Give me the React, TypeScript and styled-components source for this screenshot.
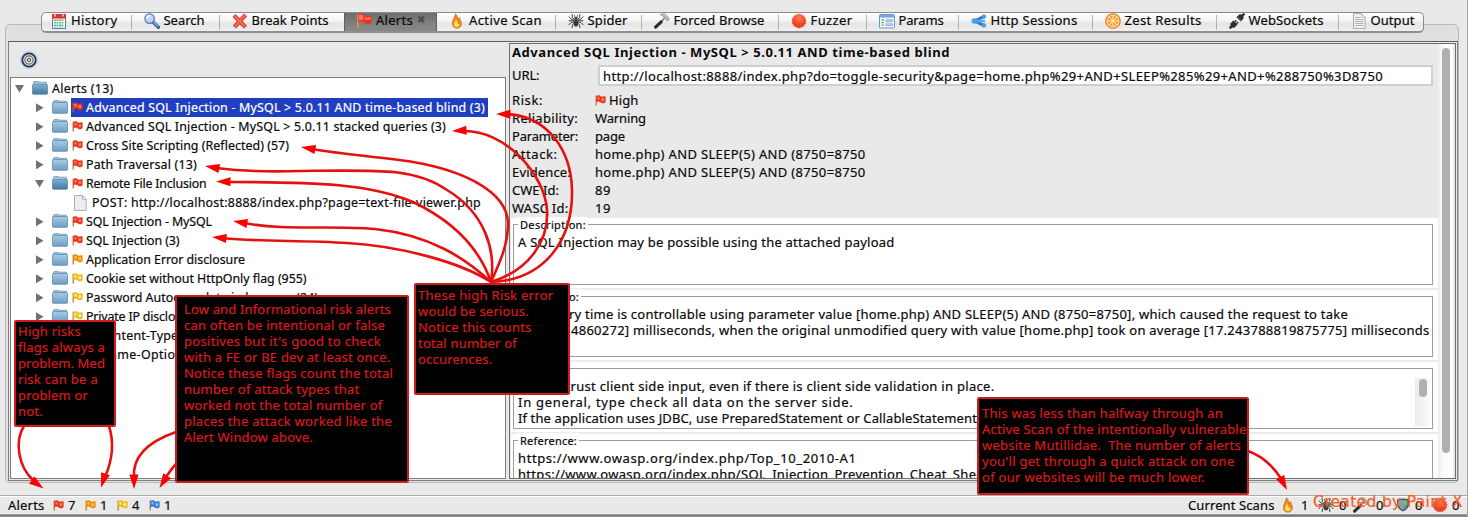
import React, { useLayoutEffect, useRef, useState } from "react";
import styled, { createGlobalStyle } from "styled-components";

const Global = createGlobalStyle`
  body { margin: 0; background: #e8e8e8; overflow: hidden; }
  * { box-sizing: border-box; }
`;

const Page = styled.div`
  position: relative;
  width: 1468px;
  height: 517px;
  overflow: hidden;
  display: flex;
  flex-direction: column;
  padding-top: 24px;
  background: #e9e9e9;
  border-right: 1px solid #a8a8a8;
  color: #0a0a0a;
  font: 13px/16px "Noto Sans", "Open Sans", sans-serif;
  -webkit-text-stroke: 0.2px;
  white-space: pre;
`;

/* Text tracked out to a given advance width. */
const TextSpan = styled.span`
  display: inline-block;
  white-space: pre;
  flex: none;
`;
function T({ w, children }: { w: number; children: string }) {
  const ref = useRef<HTMLSpanElement>(null);
  const [ls, setLs] = useState(0);
  useLayoutEffect(() => {
    if (ref.current) setLs((w - ref.current.getBoundingClientRect().width) / children.length);
  }, []);
  return <TextSpan ref={ref} style={{ letterSpacing: ls }}>{children}</TextSpan>;
}

const Panel = styled.div`
  width: 1454px;
  height: 459px;
  margin-left: 5px;
  border: 1px solid #b9b9b9;
  border-radius: 5px;
  background: #dfdfdf;
  flex: none;
`;
const TabStrip = styled.div`
  display: flex;
  width: 1383px;
  height: 21px;
  margin: -13px 0 0 35px;
  border: 1px solid #8c8c8c;
  border-bottom: 2px solid #8f8f8f;
  border-radius: 5px;
  overflow: hidden;
  background: linear-gradient(#fdfdfd, #f4f4f4 45%, #e4e4e4 55%, #efefef);
`;
const Tab = styled.div<{ $w: number; $first?: boolean; $active?: boolean }>`
  position: relative;
  flex: none;
  display: flex;
  align-items: center;
  gap: 4px;
  width: ${(p) => p.$w}px;
  height: 18px;
  padding-left: ${(p) => (p.$first ? 9 : 12)}px;
  ${(p) => p.$active && "background: linear-gradient(#6d6d6d, #828282 60%, #8a8a8a); height: 20px; padding-bottom: 2px; box-shadow: inset 1px 0 #5e5e5e, inset -1px 0 #5e5e5e;"}
  svg { flex: none; margin-top: -3px; }
`;
const TabRule = styled.i`
  position: absolute;
  right: 0;
  top: 2px;
  width: 1px;
  height: 15px;
  background: #b3b3b3;
`;
const TabLabel = styled.span`
  margin-top: -4px;
  display: flex;
`;
const CloseMark = styled.span`
  margin: -4px 0 0 0;
  color: #4d4d4d;
  font: bold 10px/12px "DejaVu Sans", sans-serif;
`;

const Frame = styled.div`
  display: flex;
  width: 1450px;
  height: 440px;
  margin: 8px 0 0 2px;
  border: 1px solid #808080;
  border-top-color: #5f5f5f;
  background: #e9e9e9;
`;
const Left = styled.div`
  width: 497px;
  padding: 0 0 1px 1px;
  display: flex;
  flex-direction: column;
`;
const Toolbar = styled.div`
  height: 35px;
  padding: 8px 0 0 9px;
  flex: none;
`;
const Tree = styled.div`
  flex: 1;
  border: 1px solid #7d7d7d;
  background: #fff;
  padding-top: 1px;
  font-size: 12.4px;
`;
const Row = styled.div<{ $level: number }>`
  display: flex;
  align-items: center;
  height: 19px;
  padding-left: ${(p) => [4, 24, 63][p.$level]}px;
`;
const Twist = styled.svg`
  flex: none;
  margin-right: 7px;
`;
const RowLabel = styled.div<{ $selected?: boolean }>`
  display: flex;
  align-items: center;
  gap: 3px;
  height: 19px;
  margin-left: 3px;
  padding: 1px 3px 0 1px;
  svg { margin-top: -2px; }
  ${(p) => p.$selected && "background: #1f3fc0; color: #fff;"}
`;
const PlainLabel = styled.div<{ $gap: number }>`
  display: flex;
  padding-top: 1px;
  margin-left: ${(p) => p.$gap}px;
`;

const Right = styled.div`
  display: flex;
  width: 947px;
  margin: 1px 0 1px 3px;
  border: 1px solid #6e6e6e;
  overflow: hidden;
`;
const Detail = styled.div`
  width: 928px;
  flex: none;
  overflow: hidden;
`;
const Info = styled.div`
  height: 174px;
  padding-left: 2px;
`;
const Title = styled.div`
  height: 20px;
  font-weight: 700;
  -webkit-text-stroke: 0;
`;
const UrlLine = styled.div`
  display: flex;
  align-items: center;
  height: 24px;
  margin: -1px 0 4px;
`;
const UrlLabel = styled.div`
  width: 86px;
`;
const UrlField = styled.div`
  width: 835px;
  height: 21px;
  padding: 1px 0 0 3px;
  border: 2px solid #cfcfcf;
  background: #fff;
`;
const Pair = styled.div`
  display: grid;
  grid-template-columns: 83px auto;
  align-items: center;
  height: 18px;
`;
const Value = styled.div`
  display: flex;
  align-items: center;
  gap: 3px;
`;
const Section = styled.div`
  height: 72px;
  padding: 6px 5px 0 2px;
  margin-left: 1px;
  background: #fff;
  border-bottom: 2px solid #ececec;
`;
const Box = styled.div`
  display: flex;
  position: relative;
  height: 61px;
  padding: 9px 0 0 4px;
  border: 1px solid #9c9c9c;
`;
const Legend = styled.div`
  position: absolute;
  top: -8px;
  left: 4px;
  padding: 0 2px;
  background: #fff;
  font-size: 11px;
  line-height: 15px;
`;
const Lines = styled.div`
  flex: 1;
`;
const Line = styled.div`
  height: 16px;
`;
const SmallTrack = styled.div`
  width: 15px;
  height: 48px;
  margin-right: 2px;
  padding: 1px 0 0 4px;
  background: linear-gradient(90deg, #ececec, #fafafa);
`;
const Thumb = styled.div<{ $h: number }>`
  width: 8px;
  height: ${(p) => p.$h}px;
  border-radius: 4px;
  background: #b0b0b0;
`;
const Track = styled.div`
  width: 15px;
  padding: 4px 0 0 4px;
  background: linear-gradient(90deg, #ececec, #fafafa 30%, #fff);
`;

const Status = styled.div`
  display: flex;
  align-items: center;
  height: 20px;
  margin-top: 12px;
  padding-left: 8px;
  border-top: 1px solid #aaa;
  border-bottom: 1px solid #a0a0a0;
  box-shadow: inset 0 1px #fff, 0 1px #777, 0 2px #8c8c8c;
  flex: none;
`;
const Count = styled.div<{ $w: number; $gap?: number }>`
  display: flex;
  align-items: center;
  gap: ${(p) => p.$gap ?? 4}px;
  width: ${(p) => p.$w}px;
  flex: none;
`;
const StatusLabel = styled.div<{ $w: number }>`
  width: ${(p) => p.$w}px;
  flex: none;
`;
const Overlay = styled.svg`
  position: absolute;
  left: 0;
  top: 0;
`;
const Note = styled.div<{ $x: number; $y: number; $w: number; $h: number; $px: number; $py: number }>`
  position: absolute;
  left: ${(p) => p.$x}px;
  top: ${(p) => p.$y}px;
  width: ${(p) => p.$w}px;
  height: ${(p) => p.$h}px;
  padding: ${(p) => p.$py}px 0 0 ${(p) => p.$px}px;
  border: 2px solid #d01a1c;
  border-radius: 2px;
  background: #000;
  color: #dc1a1a;
`;
const Credit = styled.div`
  position: absolute;
  left: 1313px;
  top: 493px;
  color: #f4602a;
  font: 15.5px/18px "DejaVu Sans", sans-serif;
`;

const flagColors: Record<string, [string, string]> = {
  red: ["#e8301c", "#ff7a5c"],
  orange: ["#f08a08", "#ffc04a"],
  yellow: ["#e8b818", "#fff08a"],
  blue: ["#2f74d0", "#8abcf6"],
};
function Flag({ c = "red" }: { c?: string }) {
  const [a, b] = flagColors[c];
  return (
    <svg width="11" height="11" viewBox="0 0 11 11">
      <path d="M1.2 .8V10.5" stroke="#b9702c" strokeWidth="1.2" />
      <path d="M1.5 1.2C3 .2 4.5 .4 5.4 1.4C7 2.2 8.6 2 10.2 1.6V7.2C8.5 8.4 6.8 8 5.6 7C4.2 5.8 2.8 6 1.5 6.8Z" fill={a} stroke={a} strokeWidth=".7" />
      <path d="M2.4 2C3.2 1.5 4 1.7 4.6 2.3V4.8C3.8 4.4 3 4.5 2.4 4.8ZM6.4 3.2C7.4 3.5 8.4 3.3 9.2 3V5.9C8.2 6.4 7.2 6.3 6.4 5.7Z" fill={b} />
    </svg>
  );
}
const BigFlag = () => (
  <svg width="16" height="16" viewBox="0 0 16 16">
    <path d="M2 1V15.5" stroke="#dd9550" strokeWidth="1.6" />
    <path d="M2.4 1.2C5 0 7 .6 8.2 2.2C10.5 3.6 13 3 15.5 2.4V10C12.6 11.6 10 11 8 9.4C6 8 4 8.4 2.4 9.4Z" fill="#ee2f1d" />
    <path d="M3 2C5 1 6.5 1.5 7.4 2.8V7.6C5.8 6.8 4.4 7 3 7.6ZM8.8 4C11 4.8 13 4.4 14.8 3.8V6.5C12.6 7.4 10.6 7.2 8.8 6.2Z" fill="#ff7057" />
  </svg>
);
const Folder = ({ open }: { open?: boolean }) => (
  <svg width="16" height="15" viewBox="0 0 16 15">
    <defs>
      <linearGradient id="fold" x1="0" y1="0" x2="0" y2="1"><stop offset="0" stopColor="#a9cbe3" /><stop offset="1" stopColor="#6d9cc2" /></linearGradient>
      <linearGradient id="foldo" x1="0" y1="0" x2="0" y2="1"><stop offset="0" stopColor="#7fb0d2" /><stop offset="1" stopColor="#43779f" /></linearGradient>
    </defs>
    <path d="M1.5 3V1.2Q1.5 .5 2.5 .5H6Q7 .5 7 1.2H14.5V4" fill="#9fc3dc" stroke="#6f9bbb" strokeWidth=".8" />
    <rect x=".5" y={open ? 3.5 : 2.5} width="15" height={open ? 9.8 : 10.8} rx=".8" fill={open ? "url(#foldo)" : "url(#fold)"} stroke="#5f8cb0" strokeWidth=".8" />
  </svg>
);
const Triangle = ({ open }: { open?: boolean }) => (
  <Twist width="10" height="10" viewBox="0 0 10 10">
    <path d={open ? "M0 1H9L4.5 8.5Z" : "M1 .3L8.5 4.8L1 9.3Z"} fill="#707070" />
  </Twist>
);
const Doc = ({ lined }: { lined?: boolean }) => (
  <svg width={lined ? 16 : 13} height="16" viewBox={lined ? "-2 0 16 16" : "0 0 13 16"}>
    <path d="M.5 .6H8.5L12.2 4.4V15.4H.5Z" fill={lined ? "#f3f3f3" : "#ededed"} stroke="#a4a4a4" strokeWidth=".9" />
    <path d="M8.5 .6V4.4H12.2Z" fill="#fff" stroke="#a4a4a4" strokeWidth=".7" />
    {lined && <path d="M2 4.5H7M2 6.5H10.5M2 8.5H10.5M2 10.5H10.5M2 12.5H10.5" stroke="#a8a8a8" strokeWidth=".9" />}
  </svg>
);
const Calendar = () => (
  <svg width="16" height="16" viewBox="0 0 16 16">
    <rect x="1.5" y="2" width="13" height="13.5" fill="#fff" stroke="#4d8a86" />
    <rect x="1" y="1" width="14" height="4.6" fill="#d8392e" />
    <path d="M4 0V3.5M12 0V3.5" stroke="#f6d4cd" strokeWidth="1.4" />
    <path d="M3 7.2H13M3 9.7H13M3 12.2H13" stroke="#5ba884" strokeWidth="1.5" strokeDasharray="1.8 .7" />
    <path d="M3 14H13" stroke="#6aa0cf" strokeDasharray="1.8 .7" />
  </svg>
);
const Magnifier = () => (
  <svg width="16" height="16" viewBox="0 0 16 16">
    <path d="M9 9L14.4 14.3" stroke="#34659e" strokeWidth="3.4" strokeLinecap="round" />
    <path d="M9.5 9L14 13.4" stroke="#8fbce8" strokeWidth="1.1" />
    <circle cx="5.6" cy="5.6" r="4.7" fill="#bcd6f8" stroke="#5878c8" strokeWidth="1.3" />
    <path d="M2.8 5.5Q3.4 2.9 6.2 2.8" stroke="#fff" strokeWidth="1.6" fill="none" />
  </svg>
);
const Cross = () => (
  <svg width="16" height="16" viewBox="0 0 16 16">
    <path d="M2 2.5L13.6 14.2M13.6 1.8L2.4 14" stroke="#d43a2b" strokeWidth="4.2" />
    <path d="M2 2.5L13.6 14.2M13.6 1.8L2.4 14" stroke="#fa6a55" strokeWidth="2.3" />
  </svg>
);
const Flame = ({ w = 16 }: { w?: number }) => (
  <svg width={w} height="16" viewBox={w === 16 ? "0 0 16 16" : "3 0 10 16"}>
    <path d="M6.2 .8C6.4 4 3.4 6.4 3.4 10.4C3.4 13.6 5.4 15.2 7.8 15.2C10.6 15.2 12.6 13.4 12.4 10.2C12.2 7.4 10.6 7 10.8 4.6C9.6 5.2 9.4 6.4 9.2 7C8.8 4.4 8.2 2 6.2 .8Z" fill="#f08420" stroke="#c9601a" strokeWidth=".6" />
    <path d="M7 6C6.6 8.2 5 9 5 11.2C5 13.2 6.4 14.2 7.8 14.2C9.6 14.2 10.8 13 10.6 10.8C9.8 11.4 8.8 11 8.6 10C8.2 8.6 7.6 7.2 7 6Z" fill="#ffe54a" />
  </svg>
);
const Spider = () => (
  <svg width="16" height="16" viewBox="0 0 16 16">
    <g stroke="#3e3e3e" strokeWidth="1" fill="none">
      <path d="M6.5 7L4.5 4.6L4 1M9.5 7L11.5 4.6L12 1M6.4 7.6L3 6L.8 3.6M9.6 7.6L13 6L15.2 3.6M6 9L3 9.4L.6 12M10 9L13 9.4L15.4 12M6.4 10L4.6 11.8L4 15M9.6 10L11.4 11.8L12 15M6 8L.6 7.6M10 8L15.4 7.6" />
    </g>
    <ellipse cx="8" cy="10.2" rx="2.3" ry="3.4" fill="#3a3a3a" />
    <circle cx="8" cy="5.6" r="1.8" fill="#4b4b4b" />
    <path d="M7 3.8L6.4 2.2M9 3.8L9.6 2.2" stroke="#444" />
  </svg>
);
const Hammer = () => (
  <svg width="16" height="16" viewBox="0 0 16 16">
    <path d="M10.5 5.2L6.6 9.4" stroke="#8c8c8c" strokeWidth="1.8" />
    <path d="M7.2 8.8L1.6 14.2" stroke="#2b2b2b" strokeWidth="3" strokeLinecap="round" />
    <path d="M6.4 1.6C9 .2 11.4 .6 12.6 2.4L15.4 6.2L13.4 8L10.6 4.8C9.6 3.4 8.4 2.4 6.4 1.6Z" fill="#b5b5b5" stroke="#7e7e7e" strokeWidth=".7" />
    <path d="M8.5 1.6C10 1.3 11.3 1.8 12.2 3.2" stroke="#eee" strokeWidth=".8" fill="none" />
  </svg>
);
const Burst = () => {
  const pts = Array.from({ length: 32 }, (_, i) => {
    const r = i % 2 ? 6.4 : 7.7, a = (i * Math.PI) / 16;
    return `${(8 + r * Math.cos(a)).toFixed(2)},${(8 + r * Math.sin(a)).toFixed(2)}`;
  }).join(" ");
  return (
    <svg width="16" height="16" viewBox="0 0 16 16">
      <defs><radialGradient id="brst" cy=".3"><stop offset="0" stopColor="#ff7a58" /><stop offset="1" stopColor="#ea3f20" /></radialGradient></defs>
      <polygon points={pts} fill="url(#brst)" />
    </svg>
  );
};
const Form = () => (
  <svg width="16" height="16" viewBox="0 0 16 16">
    <rect x=".5" y="1.5" width="15" height="13.5" rx="1" fill="#f4f8ff" stroke="#6b96cf" />
    <rect x="1" y="2" width="14" height="2.6" fill="#7ba6de" />
    <path d="M2.5 7H5M2.5 9.6H5M2.5 12.2H5" stroke="#5aac58" strokeWidth="1.3" />
    <path d="M7 6.8H13.5V8.6H7ZM7 10.8H13.5V12.6H7Z" fill="#cfe0f7" stroke="#7c9fd0" strokeWidth=".8" />
  </svg>
);
const Share = () => (
  <svg width="16" height="16" viewBox="0 0 16 16">
    <path d="M13 3.4L4 8L13 12.6" fill="none" stroke="#2f7fc8" strokeWidth="3.2" />
    <path d="M4 8H14" stroke="#5aa8e8" strokeWidth="2.4" />
    <circle cx="3.4" cy="8" r="2.8" fill="#4c9de2" /><circle cx="13" cy="3.6" r="2.2" fill="#4c9de2" /><circle cx="13" cy="12.4" r="2.2" fill="#4c9de2" />
  </svg>
);
const Orange = () => (
  <svg width="16" height="16" viewBox="0 0 16 16">
    <circle cx="8" cy="8" r="7.2" fill="#ffe2b0" stroke="#e87a1c" strokeWidth="1.3" />
    <circle cx="8" cy="8" r="5.6" fill="#f9a13a" />
    <path d="M8 2.2V13.8M2.2 8H13.8M4 4L12 12M12 4L4 12" stroke="#fff0cf" strokeWidth=".9" />
  </svg>
);
const Plug = () => (
  <svg width="16" height="16" viewBox="0 0 16 16">
    <path d="M.6 15.4L3.4 12.6M12.6 3.4L15.4 .6" stroke="#333" strokeWidth="2.4" />
    <path d="M1.6 10.6L4.2 7.6L8.4 11.8L5.6 14.6Q3.6 15.2 2.2 13.8Q.8 12.4 1.6 10.6Z" fill="#303030" />
    <path d="M7.4 4.2L10.2 1.4Q12.4 .8 13.8 2.2Q15.2 3.8 14.4 5.8L11.8 8.6Z" fill="#303030" />
    <path d="M5.4 9.2L7.4 7.2M7.2 11L9.2 9" stroke="#333" strokeWidth="1.5" />
    <path d="M9 4.2L12 7.2" stroke="#888" strokeWidth=".7" />
  </svg>
);
const Target = () => (
  <svg width="20" height="20" viewBox="0 0 20 20">
    <circle cx="10" cy="10" r="9" fill="#a9c6ea" opacity=".7" />
    <circle cx="10" cy="10" r="6.7" fill="#e4e4e4" stroke="#2b3a50" strokeWidth="1.8" />
    <circle cx="10" cy="10" r="4.1" fill="none" stroke="#666" strokeWidth="1.1" />
    <circle cx="10" cy="10" r="1.7" fill="#ccc" stroke="#555" strokeWidth="1" />
  </svg>
);
const Shield = () => (
  <svg width="14" height="14" viewBox="0 0 14 14">
    <path d="M1 1.5Q7 -.5 13 1.5V7Q12 11.5 7 13.5Q2 11.5 1 7Z" fill="#4a5668" />
    <path d="M2.6 2.6Q5 1.9 7 1.9V7H2.6Z" fill="#6da1d8" /><path d="M7 1.9Q9 1.9 11.4 2.6V7H7Z" fill="#83b85b" />
    <path d="M2.6 7H7V12Q3.4 10.2 2.6 7Z" fill="#8fb460" /><path d="M7 7H11.4Q10.6 10.4 7 12Z" fill="#6b93d0" />
  </svg>
);

const tabs: { w: number; tw: number; label: string; icon: React.ReactNode; active?: boolean; noRule?: boolean }[] = [
  { w: 89.5, tw: 46.5, label: "History", icon: <Calendar /> },
  { w: 88, tw: 41, label: "Search", icon: <Magnifier /> },
  { w: 124.5, tw: 77, label: "Break Points", icon: <Cross />, noRule: true },
  { w: 93, tw: 37, label: "Alerts", icon: <BigFlag />, active: true, noRule: true },
  { w: 118.5, tw: 73, label: "Active Scan", icon: <Flame /> },
  { w: 86, tw: 40, label: "Spider", icon: <Spider /> },
  { w: 137, tw: 91, label: "Forced Browse", icon: <Hammer /> },
  { w: 88, tw: 42, label: "Fuzzer", icon: <Burst /> },
  { w: 92, tw: 45, label: "Params", icon: <Form /> },
  { w: 134, tw: 87, label: "Http Sessions", icon: <Share /> },
  { w: 124, tw: 77, label: "Zest Results", icon: <Orange /> },
  { w: 122, tw: 75, label: "WebSockets", icon: <Plug /> },
  { w: 84, tw: 44, label: "Output", icon: <Doc lined />, noRule: true },
];

const alerts: { t: string; w: number; c?: string; open?: boolean; sel?: boolean; child?: boolean }[] = [
  { t: "Advanced SQL Injection - MySQL > 5.0.11 AND time-based blind (3)", w: 399, sel: true },
  { t: "Advanced SQL Injection - MySQL > 5.0.11 stacked queries (3)", w: 360 },
  { t: "Cross Site Scripting (Reflected) (57)", w: 203 },
  { t: "Path Traversal (13)", w: 111 },
  { t: "Remote File Inclusion", w: 120.5, open: true },
  { t: "POST: http://localhost:8888/index.php?page=text-file-viewer.php", w: 389, child: true },
  { t: "SQL Injection - MySQL", w: 126 },
  { t: "SQL Injection (3)", w: 93.5 },
  { t: "Application Error disclosure", w: 159, c: "orange" },
  { t: "Cookie set without HttpOnly flag (955)", w: 220.5, c: "yellow" },
  { t: "Password Autocomplete in browser (24)", w: 232, c: "yellow" },
  { t: "Private IP disclosure", w: 114, c: "yellow" },
  { t: "X-Content-Type-Options header missing", w: 241, c: "yellow" },
  { t: "X-Frame-Options header not set", w: 197, c: "blue" },
];

const facts: [string, number, string, number][] = [
  ["Risk:", 31, "High", 29.5],
  ["Reliability:", 66, "Warning", 51],
  ["Parameter:", 66, "page", 30],
  ["Attack:", 45.5, "home.php) AND SLEEP(5) AND (8750=8750", 270.5],
  ["Evidence:", 59, "home.php) AND SLEEP(5) AND (8750=8750", 270.5],
  ["CWE Id:", 47, "89", 16],
  ["WASC Id:", 56.5, "19", 16],
];

const sections: { name: string; nw: number; lines: [string, number][][]; scroll?: boolean }[] = [
  { name: "Description:", nw: 66, lines: [[["A SQL Injection may be possible using the attached payload", 376.5]]] },
  {
    name: "Other Info:", nw: 59,
    lines: [
      [["The que", 51], ["ry time is controllable using parameter value [home.php) AND SLEEP(5) AND (8750=8750], which caused the request to take", 779]],
      [["[5023.2", 53], ["4860272] milliseconds, when the original unmodified query with value [home.php] took on average [17.243788819875775] milliseconds", 858.5]],
    ],
  },
  {
    name: "Solution:", nw: 48, scroll: true,
    lines: [
      [["Do not t", 52.5], ["rust client side input, even if there is client side validation in place.", 424]],
      [["In general, type check all data on the server side.", 335.5]],
      [["If the application uses JDBC, use PreparedStatement or CallableStatement", 459]],
    ],
  },
  {
    name: "Reference:", nw: 57,
    lines: [
      [["https://www.owasp.org/index.php/Top_10_2010-A1", 338.5]],
      [["https://www.owasp.org/index.php/SQL_Injection_Prevention_Cheat_Sheet", 471]],
    ],
  },
];

const arrows: [string, number, number, number][] = [
  ["M491 282C545 280 573 240 572 190C571 150 548 116 506 114", 496, 114, 181],
  ["M491 282C530 270 549 240 547 210C545 175 505 129 462 131", 452, 131, 177],
  ["M491 282C500 262 508 245 508 223C507 190 460 170 413 162C380 157 340 154 312 149", 301, 147, 190],
  ["M491 282C496 250 485 213 447 190C415 168 380 170 300 171C270 172 240 171 216 168", 205, 166, 190],
  ["M491 282C480 250 455 222 413 202C370 184 320 182 227 182", 216, 181.5, 181],
  ["M491 282C465 258 430 235 375 229C330 225 285 231 244 223", 233, 221, 190],
  ["M491 282C460 262 400 246 347 243C300 240 260 242 223 238", 212, 237, 186],
  ["M24 426C15 440 17 466 34 481", 43.5, 488.5, 36],
  ["M109 426C115 445 112 461 105 477", 101, 487.5, 108],
  ["M176 432C150 441 132 455 134 478", 134, 489, 90],
  ["M176 464C172 468 169 473 166 477", 159.5, 488, 122],
  ["M1248 451C1262 456 1274 467 1282 480", 1287, 490, 62],
];

const notes: { x: number; y: number; w: number; h: number; px: number; py: number; lines: [string, number][] }[] = [
  { x: 14, y: 320, w: 102, h: 107, px: 2, py: 1, lines: [["High risks", 63], ["flags always a", 87], ["problem. Med", 87], ["risk can be a", 80], ["problem or", 70], ["not.", 25]] },
  { x: 175, y: 295, w: 234, h: 188, px: 7, py: 4, lines: [["Low and Informational risk alerts", 207], ["can often be intentional or false", 201], ["positives but it's good to check", 197], ["with a FE or BE dev at least once.", 206.5], ["Notice these flags count the total", 209], ["number of attack types that", 175.5], ["worked not the total number of", 198.5], ["places the attack worked like the", 208], ["Alert Window above.", 129]] },
  { x: 414, y: 283, w: 156, h: 112, px: 2, py: 2, lines: [["These high Risk error", 135.5], ["would be serious.", 111], ["Notice this counts", 113.5], ["total number of", 99], ["occurences.", 74.5]] },
  { x: 977, y: 397, w: 272, h: 98, px: 3, py: 6, lines: [["This was less than halfway through an", 241], ["Active Scan of the intentionally vulnerable", 264.5], ["website Mutillidae.  The number of alerts", 259], ["you'll get through a quick attack on one", 252.5], ["of our websites will be much lower.", 223]] },
];

export default function App() {
  return (
    <Page>
      <Global />
      <Panel>
        <TabStrip>
          {tabs.map((t, i) => (
            <Tab key={t.label} $w={t.w} $first={i === 0} $active={t.active}>
              {t.icon}
              <TabLabel><T w={t.tw}>{t.label}</T></TabLabel>
              {t.active && <CloseMark>✖</CloseMark>}
              {!t.noRule && <TabRule />}
            </Tab>
          ))}
        </TabStrip>
        <Frame>
          <Left>
            <Toolbar><Target /></Toolbar>
            <Tree>
              <Row $level={0}>
                <Triangle open /><Folder open />
                <PlainLabel $gap={4}><T w={61.5}>Alerts (13)</T></PlainLabel>
              </Row>
              {alerts.map((a) =>
                a.child ? (
                  <Row key={a.t} $level={2}>
                    <Doc />
                    <PlainLabel $gap={5}><T w={a.w}>{a.t}</T></PlainLabel>
                  </Row>
                ) : (
                  <Row key={a.t} $level={1}>
                    <Triangle open={a.open} /><Folder open={a.open} />
                    <RowLabel $selected={a.sel}><Flag c={a.c} /><T w={a.w}>{a.t}</T></RowLabel>
                  </Row>
                )
              )}
            </Tree>
          </Left>
          <Right>
            <Detail>
              <Info>
                <Title><T w={438}>{"Advanced SQL Injection - MySQL > 5.0.11 AND time-based blind"}</T></Title>
                <UrlLine>
                  <UrlLabel><T w={27.5}>URL:</T></UrlLabel>
                  <UrlField><T w={780}>http://localhost:8888/index.php?do=toggle-security&page=home.php%29+AND+SLEEP%285%29+AND+%288750%3D8750</T></UrlField>
                </UrlLine>
                {facts.map(([k, kw, v, vw]) => (
                  <Pair key={k}>
                    <div><T w={kw}>{k}</T></div>
                    <Value>{k === "Risk:" && <Flag />}<T w={vw}>{v}</T></Value>
                  </Pair>
                ))}
              </Info>
              {sections.map((s) => (
                <Section key={s.name}>
                  <Box>
                    <Legend><T w={s.nw}>{s.name}</T></Legend>
                    <Lines>
                      {s.lines.map((parts, i) => (
                        <Line key={i}>{parts.map(([t, w]) => <T key={t} w={w}>{t}</T>)}</Line>
                      ))}
                    </Lines>
                    {s.scroll && <SmallTrack><Thumb $h={18} /></SmallTrack>}
                  </Box>
                </Section>
              ))}
            </Detail>
            <Track><Thumb $h={405} /></Track>
          </Right>
        </Frame>
      </Panel>
      <Status>
        <StatusLabel $w={45}><T w={36.5}>Alerts</T></StatusLabel>
        <Count $w={32}><Flag />7</Count>
        <Count $w={32}><Flag c="orange" />1</Count>
        <Count $w={32}><Flag c="yellow" />4</Count>
        <Count $w={1039}><Flag c="blue" />1</Count>
        <StatusLabel $w={95}><T w={86.5}>Current Scans</T></StatusLabel>
        <Count $w={35} $gap={8}><Flame w={10} />1</Count>
        <Count $w={35} $gap={5}><Spider />0</Count>
        <Count $w={43} $gap={7}><Hammer />0</Count>
        <Count $w={36} $gap={5}><Shield />0</Count>
        <Count $w={32} $gap={4}><Burst />0</Count>
      </Status>
      <Overlay width="1468" height="517" viewBox="0 0 1468 517">
        {arrows.map(([d, x, y, a]) => (
          <g key={d}>
            <path d={d} fill="none" stroke="#e61010" strokeWidth="2.6" />
            <path d="M0 0L-14.5 -4.6V4.6Z" fill="#fb0000" transform={`translate(${x} ${y}) rotate(${a})`} />
          </g>
        ))}
      </Overlay>
      {notes.map((n) => (
        <Note key={n.x} $x={n.x} $y={n.y} $w={n.w} $h={n.h} $px={n.px} $py={n.py}>
          {n.lines.map(([t, w]) => <Line key={t}><T w={w}>{t}</T></Line>)}
        </Note>
      ))}
      <Credit><T w={150}>Created by Paint X</T></Credit>
    </Page>
  );
}
